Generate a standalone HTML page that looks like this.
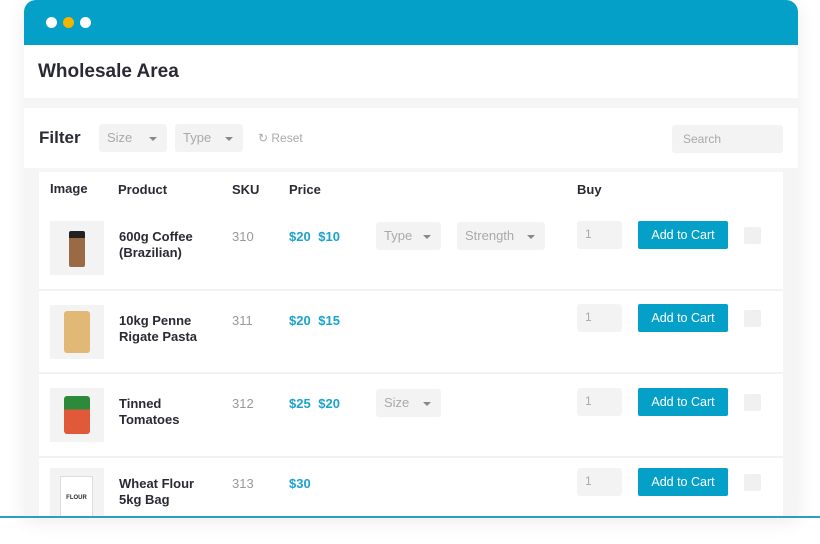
<!DOCTYPE html><html><head><style>
*{margin:0;padding:0;box-sizing:border-box}
body{width:820px;height:544px;background:#fff;font-family:"Liberation Sans",sans-serif;position:relative;overflow:hidden;color:#2a2a35}
.a{position:absolute}
.frame{left:24px;top:0;width:774px;height:517px;background:#f5f5f6;border-radius:12px 12px 0 0;overflow:hidden;box-shadow:0 4px 20px rgba(0,0,0,.08)}
.bar{left:0;top:0;width:774px;height:45px;background:#04a0c8}
.dot{width:11px;height:11px;border-radius:50%;top:17px;background:#fff}
.card{background:#fff}
.sel{background:#f3f3f3;border-radius:3px;color:#a9a9a9;font-size:13px;line-height:28px;padding-left:8px}
.dd:after{content:"";position:absolute;right:10px;top:13px;border:4px solid transparent;border-top:4px solid #888;border-bottom:0}
.b{font-weight:bold}
.h{font-size:13px;font-weight:bold;color:#2a2a35}
.pn{font-size:13px;font-weight:bold;line-height:16px;color:#2a2a35}
.sku{font-size:13px;color:#999}
.pr{font-size:13px;font-weight:bold;color:#1aa3cc;word-spacing:4px}
.qty{width:45px;height:28px;background:#f3f3f3;border-radius:3px;font-size:12px;color:#aaa;padding:6px 0 0 8px}
.btn{width:90px;height:28px;background:#05a0c8;border-radius:2px;color:#fff;font-size:12.5px;text-align:center;line-height:28px}
.cb{width:17px;height:17px;background:#f0f0f0;border-radius:2px}
.th{width:54px;height:54px;background:#f3f3f3}
.line{height:2px;background:#f2f2f2;left:15px;width:744px}
</style></head><body>
<div class="a frame">
 <div class="a bar"></div>
 <div class="a dot" style="left:22px"></div><div class="a dot" style="left:39px;background:#f5b400"></div><div class="a dot" style="left:56px"></div>
 <div class="a card" style="left:0;top:45px;width:774px;height:53px"></div>
 <div class="a b" style="left:14px;top:61px;font-size:19px">Wholesale Area</div>
 <div class="a card" style="left:0;top:108px;width:774px;height:60px"></div>
 <div class="a b" style="left:15px;top:128px;font-size:17px">Filter</div>
 <div class="a sel dd" style="left:75px;top:124px;width:68px">Size</div>
 <div class="a sel dd" style="left:151px;top:124px;width:68px">Type</div>
 <div class="a" style="left:234px;top:131px;font-size:12px;color:#aaa">↻ Reset</div>
 <div class="a sel" style="left:648px;top:125px;width:111px;font-size:12px;padding-left:11px">Search</div>
 <div class="a card" style="left:15px;top:172px;width:744px;height:345px"></div>
 <div class="a h" style="left:26px;top:181px">Image</div>
 <div class="a h" style="left:94px;top:182px">Product</div>
 <div class="a h" style="left:208px;top:182px">SKU</div>
 <div class="a h" style="left:265px;top:182px">Price</div>
 <div class="a h" style="left:553px;top:182px">Buy</div>
 <div class="a line" style="top:289px"></div><div class="a line" style="top:372px"></div><div class="a line" style="top:456px"></div>
</div>
<div class="a th" style="left:50px;top:221px"><div class="a" style="left:19px;top:10px;width:16px;height:36px;background:linear-gradient(#222 0 20%,#9a6a45 20%);border-radius:2px"></div></div>
<div class="a pn" style="left:119px;top:229px">600g Coffee<br>(Brazilian)</div>
<div class="a sku" style="left:232px;top:229px">310</div>
<div class="a pr" style="left:289px;top:229px">$20 $10</div>
<div class="a sel dd" style="left:376px;top:222px;width:65px">Type</div>
<div class="a sel dd" style="left:457px;top:222px;width:88px">Strength</div>
<div class="a qty" style="left:577px;top:221px">1</div>
<div class="a btn" style="left:638px;top:221px">Add to Cart</div>
<div class="a cb" style="left:744px;top:227px"></div>
<div class="a th" style="left:50px;top:305px"><div class="a" style="left:14px;top:6px;width:26px;height:42px;background:#e2b877;border-radius:3px"></div></div>
<div class="a pn" style="left:119px;top:313px">10kg Penne<br>Rigate Pasta</div>
<div class="a sku" style="left:232px;top:313px">311</div>
<div class="a pr" style="left:289px;top:313px">$20 $15</div>
<div class="a qty" style="left:577px;top:304px">1</div>
<div class="a btn" style="left:638px;top:304px">Add to Cart</div>
<div class="a cb" style="left:744px;top:310px"></div>
<div class="a th" style="left:50px;top:388px"><div class="a" style="left:14px;top:8px;width:26px;height:38px;background:linear-gradient(#2d8a3a 0 35%,#e05a3a 35%);border-radius:3px"></div></div>
<div class="a pn" style="left:119px;top:396px">Tinned<br>Tomatoes</div>
<div class="a sku" style="left:232px;top:396px">312</div>
<div class="a pr" style="left:289px;top:396px">$25 $20</div>
<div class="a sel dd" style="left:376px;top:389px;width:65px">Size</div>
<div class="a qty" style="left:577px;top:388px">1</div>
<div class="a btn" style="left:638px;top:388px">Add to Cart</div>
<div class="a cb" style="left:744px;top:394px"></div>
<div class="a th" style="left:50px;top:468px;height:49px"><div class="a" style="left:10px;top:8px;width:33px;height:41px;background:#fff;border:1px solid #ddd;font-size:6px;text-align:center;padding-top:18px;font-weight:bold">FLOUR</div></div>
<div class="a pn" style="left:119px;top:476px">Wheat Flour<br>5kg Bag</div>
<div class="a sku" style="left:232px;top:476px">313</div>
<div class="a pr" style="left:289px;top:476px">$30</div>
<div class="a qty" style="left:577px;top:468px">1</div>
<div class="a btn" style="left:638px;top:468px">Add to Cart</div>
<div class="a cb" style="left:744px;top:474px"></div>
<div class="a" style="left:0;top:516px;width:820px;height:2px;background:#2a9fc4"></div>
</body></html>
